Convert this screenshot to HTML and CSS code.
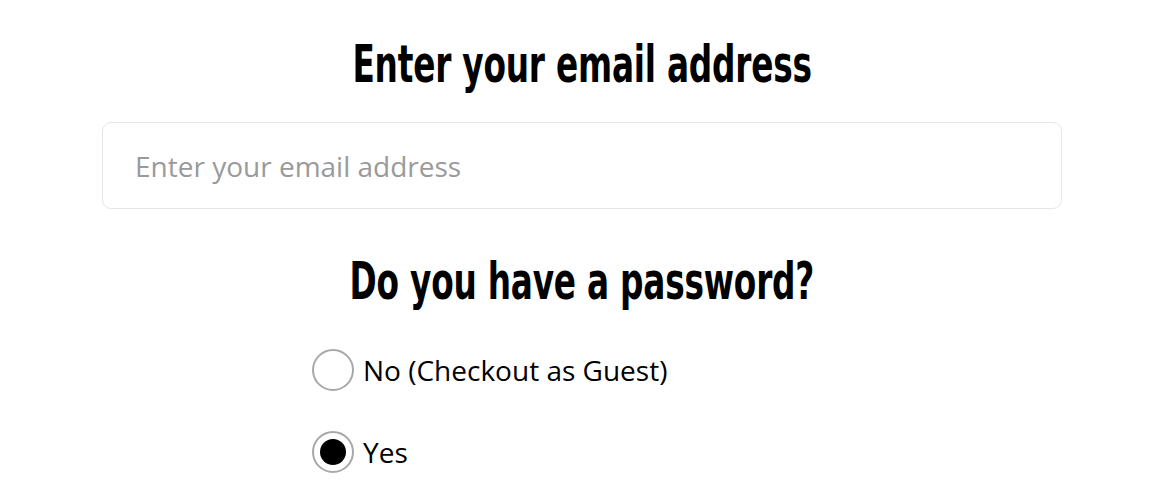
FILE: index.html
```html
<!DOCTYPE html>
<html lang="en">
<head>
<meta charset="utf-8">
<title>Checkout</title>
<link rel="stylesheet" href="styles.css">
</head>
<body>
<main class="checkout">
  <h2 class="title">Enter your email address</h2>
  <input class="email" type="email" placeholder="Enter your email address">
  <h2 class="title title-second">Do you have a password?</h2>
  <div class="options">
    <label class="option">
      <span class="radio"></span>
      <span class="option-text">No (Checkout as Guest)</span>
    </label>
    <label class="option">
      <span class="radio checked"></span>
      <span class="option-text">Yes</span>
    </label>
  </div>
</main>
</body>
</html>
```
FILE: styles.css
```css
html, body {
  margin: 0;
  padding: 0;
  background: #fff;
}
body {
  font-family: "Open Sans", "Liberation Sans", sans-serif;
  color: #000;
}
.checkout {
  width: 960px;
  margin-left: 102px;
  padding-top: 29px;
  display: flex;
  flex-direction: column;
  align-items: center;
}
.title {
  margin: 0;
  font-family: "DejaVu Sans Condensed", "Liberation Sans", sans-serif;
  font-weight: 700;
  font-size: 52px;
  line-height: 70px;
  letter-spacing: -0.3px;
  color: #000;
  white-space: nowrap;
  transform: scaleX(0.7);
}
.email {
  box-sizing: border-box;
  width: 960px;
  height: 87px;
  margin-top: 23px;
  padding: 0 32px;
  border: 1px solid #e6e6e6;
  border-radius: 9px;
  font-family: "Open Sans", sans-serif;
  font-size: 28px;
  color: #333;
  outline: none;
}
.email::placeholder {
  color: #9a9a9a;
}
.title-second {
  margin-top: 37px;
}
.options {
  width: 540px;
  display: flex;
  flex-direction: column;
  gap: 40px;
  margin-top: 33px;
}
.option {
  display: flex;
  align-items: center;
  gap: 9px;
}
.radio {
  box-sizing: border-box;
  width: 42px;
  height: 42px;
  border: 2px solid #a8a8a8;
  border-radius: 50%;
  display: flex;
  align-items: center;
  justify-content: center;
  flex: none;
}
.radio.checked::after {
  content: "";
  width: 26px;
  height: 26px;
  border-radius: 50%;
  background: #000;
}
.option-text {
  font-size: 28px;
  line-height: 38px;
}
```
